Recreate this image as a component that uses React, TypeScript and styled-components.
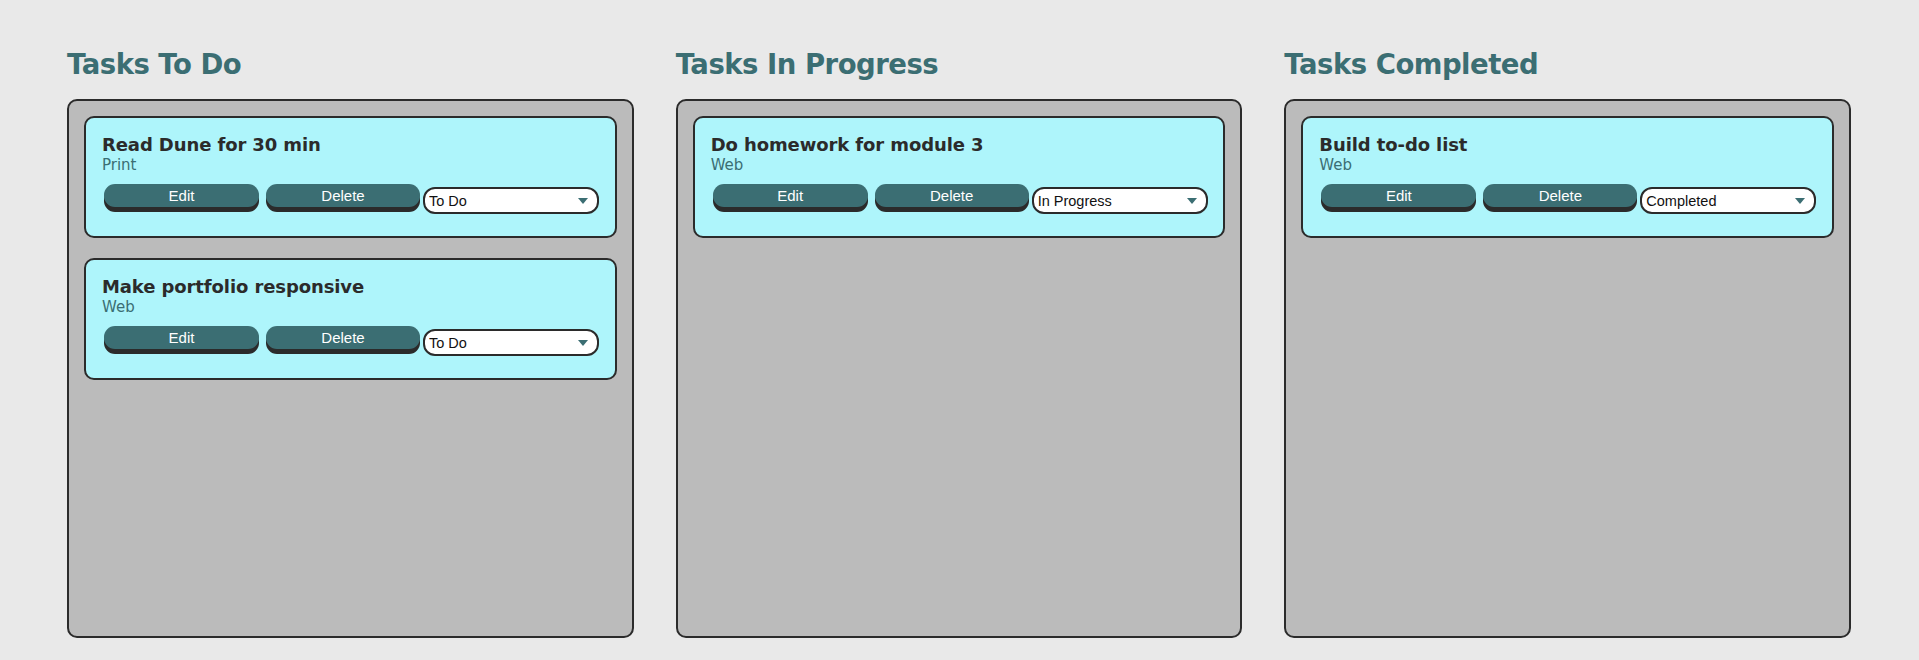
import React from "react";
import styled, { createGlobalStyle } from "styled-components";

type Task = {
    id: number;
    title: string;
    category: string;
    status: string;
};

const tasks: Task[] = [
    { id: 1, title: "Read Dune for 30 min", category: "Print", status: "To Do" },
    { id: 2, title: "Make portfolio responsive", category: "Web", status: "To Do" },
    { id: 3, title: "Do homework for module 3", category: "Web", status: "In Progress" },
    { id: 4, title: "Build to-do list", category: "Web", status: "Completed" },
];

const columns = [
    { heading: "Tasks To Do", status: "To Do" },
    { heading: "Tasks In Progress", status: "In Progress" },
    { heading: "Tasks Completed", status: "Completed" },
];

const statuses = ["To Do", "In Progress", "Completed"];

const TaskCard = function(props: { task: Task }) {
    return (
        <Card>
            <Title>{props.task.title}</Title>
            <Category>{props.task.category}</Category>
            <ActionRow>
                <ActionButton>Edit</ActionButton>
                <ActionButton>Delete</ActionButton>
                <SelectWrap>
                    <StatusSelect defaultValue={props.task.status}>
                        {statuses.map(s => <option key={s} value={s}>{s}</option>)}
                    </StatusSelect>
                    <Arrow width="10" height="6" viewBox="0 0 10 6">
                        <path d="M0 0 L10 0 L5 6 Z" fill="#3b6e73" />
                    </Arrow>
                </SelectWrap>
            </ActionRow>
        </Card>
    )
}

const App = function() {
    return (
        <>
            <GlobalStyle />
            <Board>
                {columns.map(col => (
                    <Column key={col.heading}>
                        <Heading>{col.heading}</Heading>
                        <Lane>
                            {tasks.filter(t => t.status === col.status).map(t => (
                                <TaskCard key={t.id} task={t} />
                            ))}
                        </Lane>
                    </Column>
                ))}
            </Board>
        </>
    )
}

export default App;

const GlobalStyle = createGlobalStyle`
    html, body {
        margin: 0;
        padding: 0;
        background: #e9e9e9;
        font-family: "DejaVu Sans", Verdana, sans-serif;
    }
`

const Board = styled.main`
    display: grid;
    grid-template-columns: repeat(3, minmax(0, 1fr));
    column-gap: 42px;
    padding: 0 68px 0 67px;
    height: 660px;
    box-sizing: border-box;
`

const Column = styled.section`
    display: flex;
    flex-direction: column;
    min-width: 0;
`

const Heading = styled.h2`
    margin: 0 0 19px;
    padding-top: 48px;
    line-height: 32px;
    font-size: 27.5px;
    font-weight: 700;
    color: #3b6e73;
    letter-spacing: -0.5px;
    white-space: nowrap;
`

const Lane = styled.div`
    height: 539px;
    box-sizing: border-box;
    background: #bbbbbb;
    border: 2px solid #2b2b2b;
    border-radius: 10px;
    padding: 15px;
    display: flex;
    flex-direction: column;
    gap: 20px;
`

const Card = styled.div`
    background: #aef5fb;
    border: 2px solid #2b2b2b;
    border-radius: 10px;
    padding: 16px 15px 22px 16px;
    display: flex;
    flex-direction: column;
`

const Title = styled.div`
    font-size: 18px;
    font-weight: 700;
    color: #2b2b2b;
    line-height: 22px;
    letter-spacing: -0.1px;
`

const Category = styled.div`
    font-size: 15px;
    color: #3b6e73;
    line-height: 18px;
`

const ActionRow = styled.div`
    display: flex;
    align-items: flex-start;
    gap: 3px;
    padding-left: 2px;
    margin-top: 10px;
`

const ActionButton = styled.button`
    flex: 0 0 155px;
    height: 23px;
    border: none;
    border-radius: 11px;
    background: #3b6e73;
    color: #ffffff;
    font-family: "Liberation Sans", Arial, sans-serif;
    font-size: 15px;
    box-shadow: 0 5px 0 #2b2b2b;
    cursor: pointer;

    & + & {
        flex-basis: 154px;
        margin-left: 4px;
    }
`

const SelectWrap = styled.div`
    position: relative;
    flex: 0 0 176px;
    margin-top: 3px;
`

const StatusSelect = styled.select`
    appearance: none;
    width: 100%;
    height: 27px;
    box-sizing: border-box;
    border: 2px solid #2b2b2b;
    border-radius: 12px;
    background: #ffffff;
    padding: 0 20px 0 4px;
    font-family: "Liberation Sans", Arial, sans-serif;
    font-size: 14.5px;
    color: #111111;
`

const Arrow = styled.svg`
    position: absolute;
    right: 11px;
    top: 11px;
    pointer-events: none;
`
